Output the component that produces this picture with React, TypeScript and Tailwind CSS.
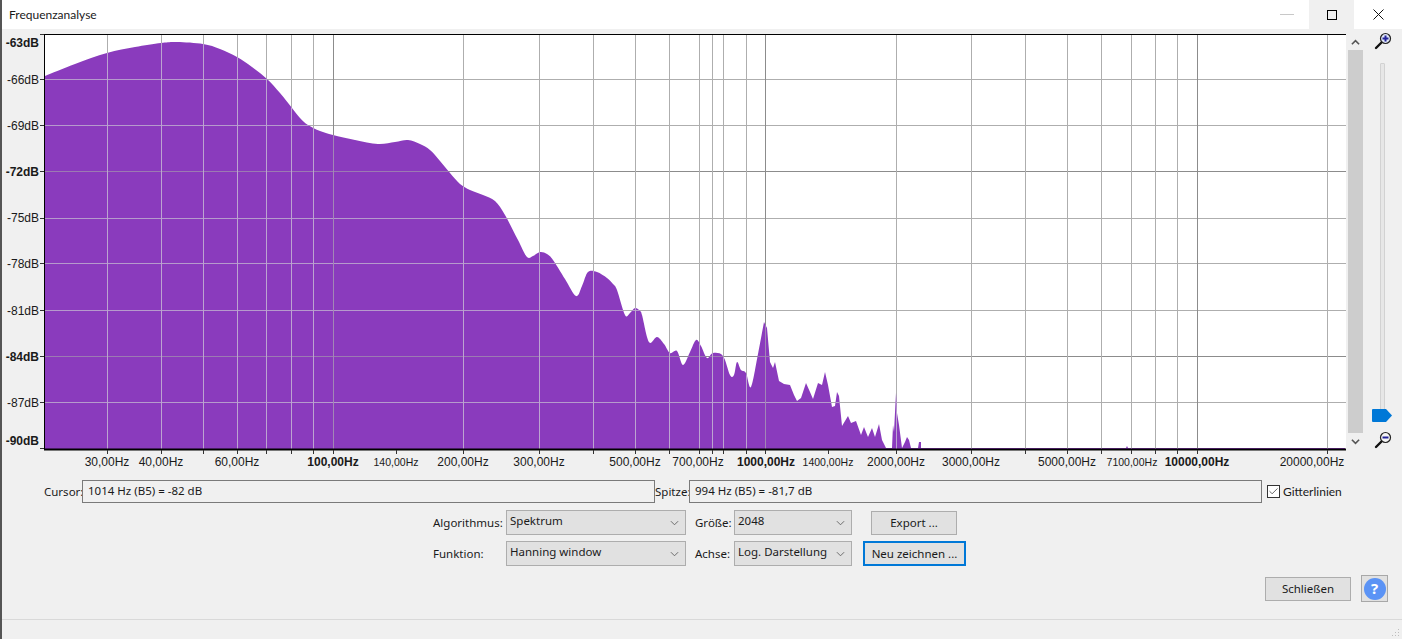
import { Check } from "lucide-react";

const uiFont = "font-['Noto_Sans','Open_Sans',sans-serif] text-[11.5px] text-[#1a1a1a]";

// spectrum outline, in page pixels
const smoothPart: [number, number][] = [
    [45, 76], [75, 64], [107, 53], [135, 47], [161, 43], [177, 42], [203, 44], [220, 49], [237, 57], [252, 67], [267, 79],
    [280, 93], [292, 108], [300, 118], [308, 125], [320, 131], [333, 135], [355, 140], [378, 144], [395, 142], [408, 140],
    [420, 144], [430, 150], [440, 161], [450, 173], [460, 184], [470, 190], [483, 195], [495, 201], [505, 215], [518, 240],
    [527, 257], [533, 256], [540, 252], [547, 254], [553, 260], [565, 279], [576, 296], [582, 286], [588, 272], [597, 272],
    [607, 278], [613, 284], [617, 290], [625, 315], [630, 313], [635, 308], [640, 311], [642, 315], [649, 342], [657, 337],
    [664, 344], [670, 353], [677, 351], [683, 365], [690, 352], [696, 340], [701, 346], [707, 358], [713, 353], [723, 356],
    [730, 375], [734, 375], [737, 362], [741, 370], [746, 373], [751, 387], [758, 354], [764, 322],
];

const sharpPart: [number, number][] = [
    [767, 328], [770, 362], [773, 368], [775, 362], [779, 381], [784, 384], [790, 385], [794, 395], [797, 401], [801, 398],
    [806, 383], [810, 392], [813, 399], [818, 383], [822, 385], [825, 372], [828, 385], [832, 407], [835, 406], [837, 392],
    [839, 396], [842, 426], [848, 416], [851, 423], [856, 421], [861, 435], [864, 427], [868, 437], [872, 428], [875, 437],
    [879, 424], [882, 440], [886, 448], [892, 448], [893, 425], [894, 432], [896, 393], [897, 413], [899, 425], [902, 448],
    [905, 442], [907, 437], [909, 440], [911, 448], [918, 448], [919, 442], [921, 442], [921, 448], [1126, 448], [1127, 446],
    [1128, 448], [1345, 448],
];

// catmull-rom through the points so the outline isn't polygonal
function smoothCurve(pts: [number, number][]) {
    let d = "";
    for (let i = 0; i < pts.length - 1; i++) {
        const p0 = pts[Math.max(i - 1, 0)];
        const p1 = pts[i];
        const p2 = pts[i + 1];
        const p3 = pts[Math.min(i + 2, pts.length - 1)];
        const c1x = p1[0] + (p2[0] - p0[0]) / 6;
        const c1y = p1[1] + (p2[1] - p0[1]) / 6;
        const c2x = p2[0] - (p3[0] - p1[0]) / 6;
        const c2y = p2[1] - (p3[1] - p1[1]) / 6;
        d += ` C${c1x} ${c1y} ${c2x} ${c2y} ${p2[0]} ${p2[1]}`;
    }
    return d;
}

const spectrumPath = `M45 449 L45 76${smoothCurve(smoothPart)} L${sharpPart.map(([x, y]) => `${x} ${y}`).join(" L")} L1345 449 Z`;

const hLines = [
    { y: 79.5, major: false },
    { y: 125.5, major: false },
    { y: 171.5, major: true },
    { y: 218.5, major: false },
    { y: 263.5, major: false },
    { y: 310.5, major: false },
    { y: 356.5, major: true },
    { y: 402.5, major: false },
];

const vLines = [
    107.5, 161.5, 203.5, 237.5, 266.5, 291.5, 313.5, 463.5, 539.5, 593.5, 635.5, 669.5, 699.5, 712.5, 723.5, 746.5,
    896.5, 971.5, 1025.5, 1067.5, 1101.5, 1131.5, 1155.5, 1177.5, 1327.5,
];
const vMajor = [333.5, 765.5, 1197.5];
const extraTicks = [396.5, 828.5];

const dbLabels = [
    { t: "-63dB", y: 47, b: true },
    { t: "-66dB", y: 84, b: false },
    { t: "-69dB", y: 130, b: false },
    { t: "-72dB", y: 176, b: true },
    { t: "-75dB", y: 222, b: false },
    { t: "-78dB", y: 268, b: false },
    { t: "-81dB", y: 315, b: false },
    { t: "-84dB", y: 361, b: true },
    { t: "-87dB", y: 407, b: false },
    { t: "-90dB", y: 445, b: true },
];

const hzLabels = [
    { t: "30,00Hz", x: 107 },
    { t: "40,00Hz", x: 161 },
    { t: "60,00Hz", x: 237 },
    { t: "100,00Hz", x: 333, b: true },
    { t: "140,00Hz", x: 396, s: true },
    { t: "200,00Hz", x: 463 },
    { t: "300,00Hz", x: 539 },
    { t: "500,00Hz", x: 635 },
    { t: "700,00Hz", x: 698 },
    { t: "1000,00Hz", x: 766, b: true },
    { t: "1400,00Hz", x: 828, s: true },
    { t: "2000,00Hz", x: 896 },
    { t: "3000,00Hz", x: 971 },
    { t: "5000,00Hz", x: 1067 },
    { t: "7100,00Hz", x: 1132, s: true },
    { t: "10000,00Hz", x: 1197, b: true },
    { t: "20000,00Hz", x: 1312 },
];

function Spectrum() {
    return (
        <svg viewBox="0 29 1346 446" className="w-[1346px] h-[446px] block shrink-0">
            <defs>
                <clipPath id="fill">
                    <path d={spectrumPath} />
                </clipPath>
            </defs>
            <rect x="44" y="34" width="1302" height="415" fill="#ffffff" />
            {hLines.map((l) => (
                <line key={l.y} x1="45" x2="1346" y1={l.y} y2={l.y} stroke={l.major ? "#8c8c8c" : "#aeaeae"} />
            ))}
            {vLines.map((x) => (
                <line key={x} x1={x} x2={x} y1="35" y2="449" stroke="#aeaeae" />
            ))}
            {vMajor.map((x) => (
                <line key={x} x1={x} x2={x} y1="35" y2="449" stroke="#8c8c8c" />
            ))}
            <path d={spectrumPath} fill="#8a3bbd" />
            <g clipPath="url(#fill)">
                {hLines.map((l) => (
                    <line key={l.y} x1="45" x2="1346" y1={l.y} y2={l.y} stroke={l.major ? "#9c7ab2" : "#b69acc"} />
                ))}
                {vLines.map((x) => (
                    <line key={x} x1={x} x2={x} y1="35" y2="449" stroke="#bca4d0" />
                ))}
                {vMajor.map((x) => (
                    <line key={x} x1={x} x2={x} y1="35" y2="449" stroke="#a286b6" />
                ))}
            </g>
            <rect x="44.5" y="34.5" width="1302" height="415" fill="none" stroke="#000000" />
            <line x1="44" x2="1347" y1="449.5" y2="449.5" stroke="#000000" strokeWidth="2" />
            {dbLabels.map((d, i) => (
                <line
                    key={d.t}
                    x1="40"
                    x2="44"
                    y1={i === 0 ? 34.5 : i === 9 ? 448.5 : hLines[i - 1].y}
                    y2={i === 0 ? 34.5 : i === 9 ? 448.5 : hLines[i - 1].y}
                    stroke="#333333"
                />
            ))}
            {[...vLines, ...vMajor, ...extraTicks].map((x) => (
                <line key={x} x1={x} x2={x} y1="450" y2="454" stroke="#333333" />
            ))}
            {dbLabels.map((d) => (
                <text
                    key={d.t}
                    x="39"
                    y={d.y}
                    textAnchor="end"
                    fill="#1a1a1a"
                    className="font-['Liberation_Sans',sans-serif] text-[12px]"
                    fontWeight={d.b ? 700 : 400}
                >
                    {d.t}
                </text>
            ))}
            {hzLabels.map((h) => (
                <text
                    key={h.t}
                    x={h.x}
                    y="466"
                    textAnchor="middle"
                    fill="#1a1a1a"
                    fontWeight={h.b ? 700 : 400}
                    fontSize={h.s ? "10.5px" : "12px"}
                    className="font-['Liberation_Sans',sans-serif]"
                >
                    {h.t}
                </text>
            ))}
        </svg>
    );
}

function Magnifier({ minus }: { minus?: boolean }) {
    return (
        <svg viewBox="0 0 18 18" className="w-[18px] h-[18px]">
            <line x1="2" y1="16" x2="7.5" y2="10.5" stroke="#111111" strokeWidth="2.4" strokeLinecap="round" />
            <circle cx="11.5" cy="6.5" r="5" fill={minus ? "#f4f4f4" : "#dfe6f7"} stroke="#222222" strokeWidth="1.2" />
            <rect x="8.5" y="5.5" width="6" height="2" fill="#22229a" />
            {!minus && <rect x="10.5" y="3.5" width="2" height="6" fill="#22229a" />}
        </svg>
    );
}

function Scrollbar() {
    return (
        <div className="w-[15px] ml-[2px] mt-[5px] flex flex-col items-center h-[416px]">
            <svg viewBox="0 0 10 7" className="w-[9px] h-[7px] mt-[5px] shrink-0">
                <path d="M1 5.5 L5 1.5 L9 5.5" fill="none" stroke="#555555" strokeWidth="1.8" />
            </svg>
            <div className="w-[15px] flex-1 bg-[#cdcdcd] mt-[4px]" />
            <svg viewBox="0 0 10 7" className="w-[9px] h-[7px] mt-[5px] mb-[5px] shrink-0">
                <path d="M1 1.5 L5 5.5 L9 1.5" fill="none" stroke="#555555" strokeWidth="1.8" />
            </svg>
        </div>
    );
}

function ZoomSlider() {
    return (
        <div className="w-[38px] flex flex-col items-center pt-[3px] pl-[1px] h-[422px]">
            <Magnifier />
            <div className="relative w-[5px] mt-[13px] h-[347px] bg-[#e7e7e7] border border-[#d2d2d2] rounded-[1px]">
                <svg viewBox="0 0 20 13" className="absolute left-[-9px] bottom-[-13px] w-[20px] h-[13px]">
                    <path d="M0 1 Q0 0 1 0 L14 0 L20 6.5 L14 13 L1 13 Q0 13 0 12 Z" fill="#0078d7" />
                </svg>
            </div>
            <div className="mt-[21px]">
                <Magnifier minus />
            </div>
        </div>
    );
}

function ReadOut({ width, children }: { width: string; children: string }) {
    return (
        <div className={`${width} h-[23px] border border-[#7a7a7a] bg-[#f0f0f0] pl-[5px] leading-[20px] shrink-0`}>
            {children}
        </div>
    );
}

function Select({ width, value }: { width: string; value: string }) {
    return (
        <div className={`${width} h-[25px] shrink-0 border border-[#adadad] bg-[#e1e1e1] pl-[3px] pr-[6px] flex items-center justify-between`}>
            <span className="-mt-[3px]">{value}</span>
            <svg viewBox="0 0 10 6" className="w-[9px] h-[6px]">
                <path d="M1 1 L5 5 L9 1" fill="none" stroke="#606060" strokeWidth="1" />
            </svg>
        </div>
    );
}

export default function App() {
    return (
        <div className={`w-[1402px] h-[639px] bg-[#f0f0f0] border-l-2 border-[#555555] overflow-hidden flex flex-col ${uiFont}`}>
            <div className="h-[29px] bg-white flex items-center justify-between shrink-0">
                <span className="ml-[7px] font-['Lato',sans-serif] text-[12px]">Frequenzanalyse</span>
                <div className="flex h-full items-center">
                    <div className="w-[45px] h-full flex items-center justify-center">
                        <div className="w-[14px] h-[1px] bg-[#c8c8c8]" />
                    </div>
                    <div className="w-[45px] h-full bg-[#f0f0f0] flex items-center justify-center">
                        <div className="w-[10px] h-[10px] border border-black" />
                    </div>
                    <div className="w-[48px] h-full flex items-center justify-center">
                        <svg viewBox="0 0 11 11" className="w-[11px] h-[11px]">
                            <path d="M0.5 0.5 L10.5 10.5 M10.5 0.5 L0.5 10.5" stroke="#111111" strokeWidth="1" />
                        </svg>
                    </div>
                </div>
            </div>

            <div className="flex h-[446px] -ml-[2px] shrink-0">
                <Spectrum />
                <Scrollbar />
                <ZoomSlider />
            </div>

            <div className="flex items-center h-[23px] mt-[5px] ml-[42px] shrink-0">
                <span className="w-[38px]">Cursor:</span>
                <ReadOut width="w-[573px]">1014 Hz (B5) = -82 dB</ReadOut>
                <span className="w-[34px]">Spitze:</span>
                <ReadOut width="w-[573px]">994 Hz (B5) = -81,7 dB</ReadOut>
                <span className="ml-[5px] w-[13px] h-[13px] border border-[#333333] bg-white flex items-center justify-center">
                    <Check size={11} strokeWidth={1.5} color="#222222" />
                </span>
                <span className="ml-[3px] font-['Lato',sans-serif] text-[12px]">Gitterlinien</span>
            </div>

            <div className="ml-[431px] mt-[7px] grid grid-cols-[73px_180px_9px_39px_118px_19px_86px] shrink-0 w-fit">
                <span className="self-center">Algorithmus:</span>
                <Select width="w-[180px]" value="Spektrum" />
                <span />
                <span className="self-center">Größe:</span>
                <Select width="w-[118px]" value="2048" />
                <span />
                <div className="h-[24px] mt-[1px] border border-[#adadad] bg-[#e1e1e1] flex items-center justify-center">Export ...</div>
            </div>
            <div className="ml-[431px] mt-[6px] flex items-center shrink-0">
                <span className="w-[73px]">Funktion:</span>
                <Select width="w-[180px]" value="Hanning window" />
                <span className="ml-[9px] w-[39px]">Achse:</span>
                <Select width="w-[118px]" value="Log. Darstellung" />
                <div className="ml-[11px] w-[103px] h-[25px] border-2 border-[#0078d7] bg-[#e1e1e1] flex items-center justify-center">
                    Neu zeichnen ...
                </div>
            </div>

            <div className="flex justify-end items-center mt-[9px] mr-[14px] shrink-0">
                <div className="w-[86px] h-[24px] border border-[#adadad] bg-[#e1e1e1] flex items-center justify-center">Schließen</div>
                <div className="ml-[10px] w-[27px] h-[27px] border border-[#a8a8a8] bg-[#e1e1e1] flex items-center justify-center">
                    <span className="w-[22px] h-[22px] rounded-full bg-[#5b93f5] text-white font-bold text-[15px] flex items-center justify-center">?</span>
                </div>
            </div>

            <div className="mt-[17px] border-t border-[#d9d9d9] flex-1 flex items-end justify-end pr-[2px] pb-[2px]">
                <svg viewBox="0 0 10 10" className="w-[10px] h-[10px]">
                    <path d="M8 2h1v1H8zM5 5h1v1H5zM8 5h1v1H8zM2 8h1v1H2zM5 8h1v1H5zM8 8h1v1H8z" fill="#bdbdbd" />
                </svg>
            </div>
        </div>
    );
}
